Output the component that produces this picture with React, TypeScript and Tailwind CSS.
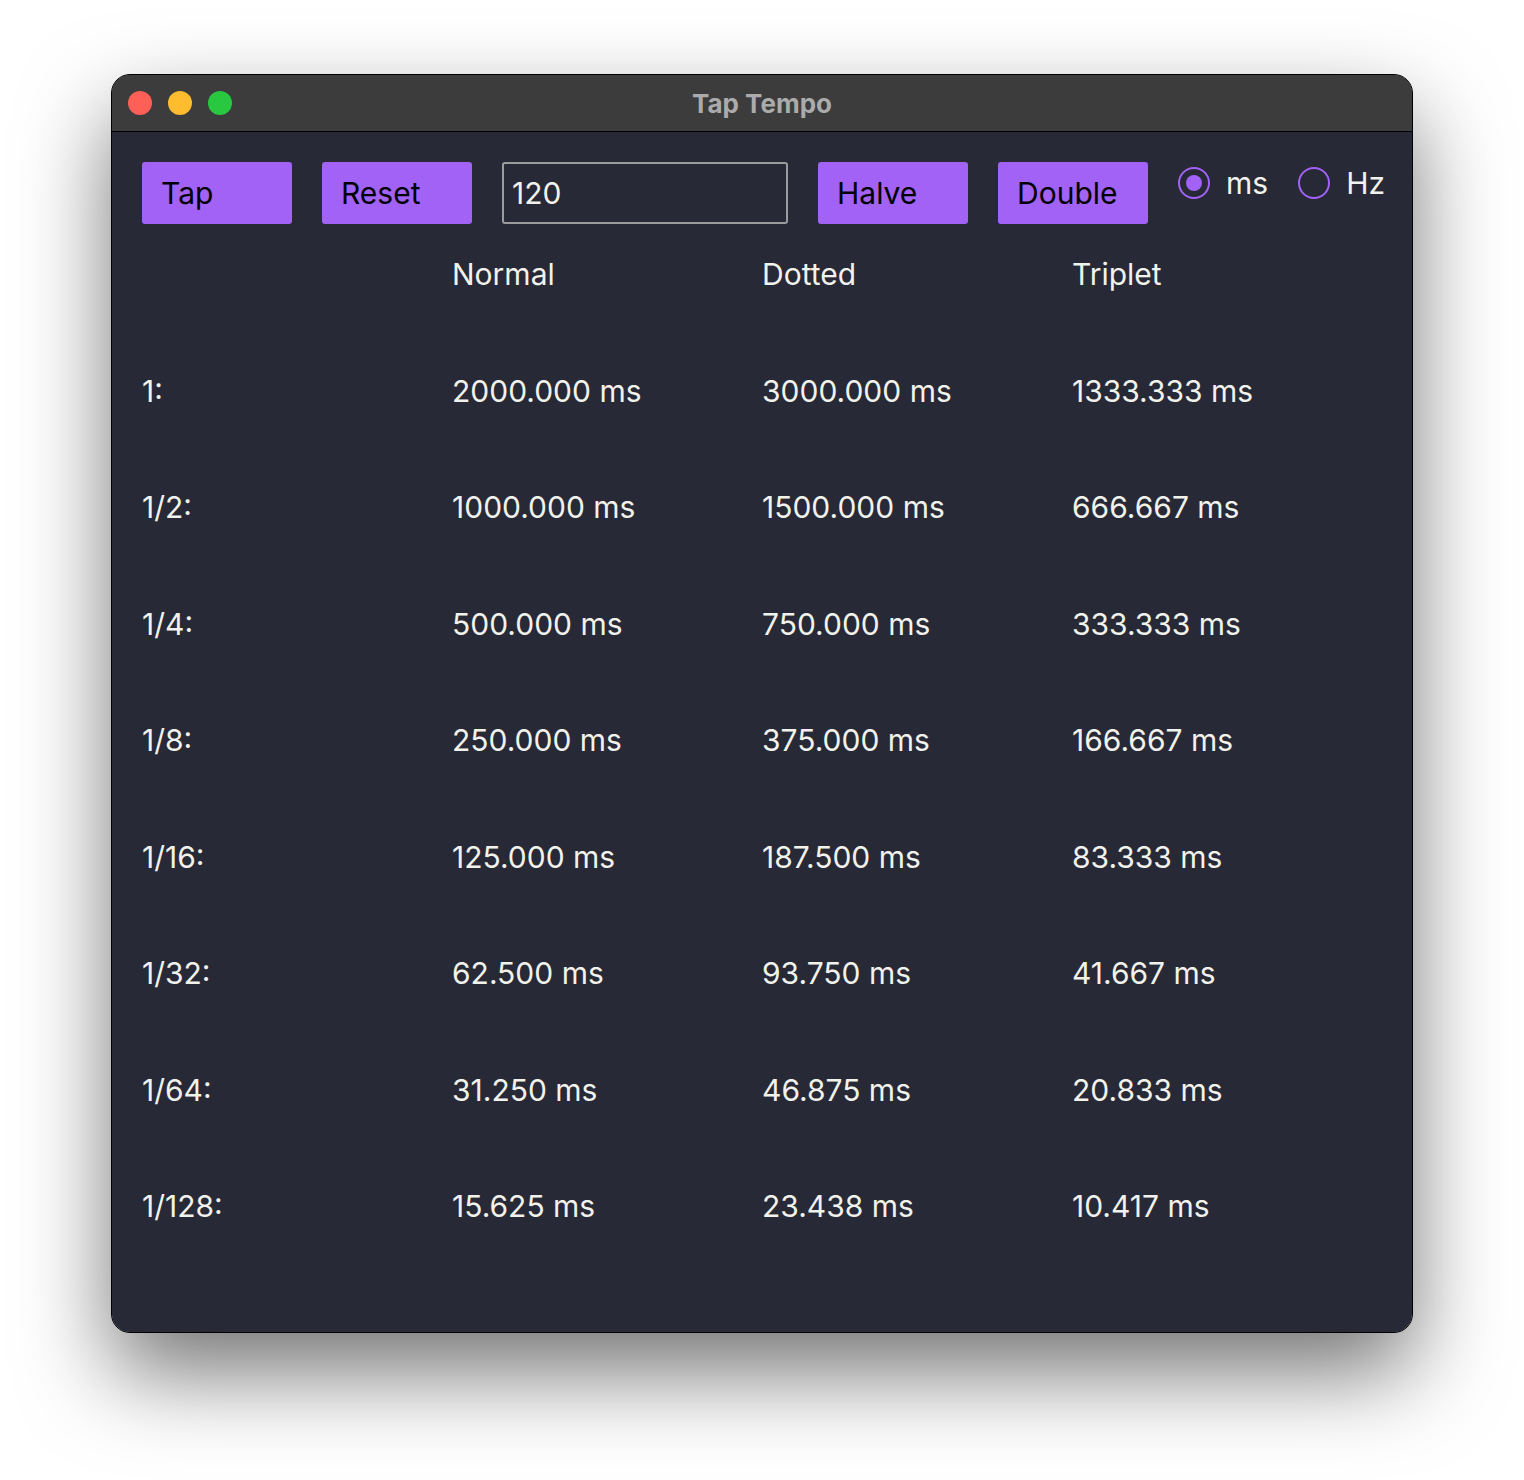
import React, { useState } from 'react';

const divisions = ['1', '1/2', '1/4', '1/8', '1/16', '1/32', '1/64', '1/128'];

const fmt = (v: number) => `${v.toFixed(3)} ms`;

const TrafficLights = () => (
  <div className="flex items-center gap-[16px]">
    <span className="w-[24px] h-[24px] rounded-full bg-[#fe5f57]" />
    <span className="w-[24px] h-[24px] rounded-full bg-[#febc2e]" />
    <span className="w-[24px] h-[24px] rounded-full bg-[#28c840]" />
  </div>
);

const PurpleButton = ({ label, onClick }: { label: string; onClick?: () => void }) => (
  <button
    onClick={onClick}
    className="w-[150px] h-[62px] shrink-0 rounded-[3px] bg-[#a162f5] text-black text-left pl-[19px] text-[30px] leading-none"
  >
    {label}
  </button>
);

const Radio = ({ label, checked, onClick }: { label: string; checked: boolean; onClick: () => void }) => (
  <button onClick={onClick} className="flex items-center gap-[16px] text-[30px] leading-[36px] text-[#f2f2ec]">
    <span className="w-[32px] h-[32px] rounded-full border-[2px] border-[#a162f5] flex items-center justify-center">
      {checked && <span className="w-[16px] h-[16px] rounded-full bg-[#a162f5]" />}
    </span>
    {label}
  </button>
);

export default function App() {
  const [bpm, setBpm] = useState('120');
  const [unit, setUnit] = useState<'ms' | 'Hz'>('ms');

  const beat = 60000 / (parseFloat(bpm) || 120);
  const whole = beat * 4;

  return (
    <div
      className="min-h-[1480px] bg-white pt-[75px] flex justify-center"
      style={{ fontFamily: 'Inter, "Noto Sans", sans-serif' }}
    >
      <div className="w-[1300px] h-[1257px] rounded-[18px] overflow-hidden outline outline-1 outline-black bg-[#272936] shadow-[0_40px_90px_rgba(0,0,0,0.55)] flex flex-col">
        {/* Title bar */}
        <div className="relative h-[57px] shrink-0 bg-[#3c3c3c] border-b border-black flex items-center px-[16px]">
          <TrafficLights />
          <div className="absolute inset-0 flex items-center justify-center text-[26px] font-bold text-[#ababab]">
            Tap Tempo
          </div>
        </div>

        <div className="p-[30px] flex flex-col">
          {/* Toolbar */}
          <div className="flex gap-[30px] items-start">
            <PurpleButton label="Tap" />
            <PurpleButton label="Reset" />
            <input
              value={bpm}
              onChange={(e) => setBpm(e.target.value)}
              className="w-[286px] h-[62px] shrink-0 rounded-[3px] border-[2px] border-[#9b9b9b] bg-transparent px-[8px] text-[30px] text-[#f2f2ec] outline-none"
            />
            <PurpleButton label="Halve" onClick={() => setBpm(String((parseFloat(bpm) || 120) / 2))} />
            <PurpleButton label="Double" onClick={() => setBpm(String((parseFloat(bpm) || 120) * 2))} />
            <div className="flex gap-[30px] ml-auto pt-[3px]">
              <Radio label="ms" checked={unit === 'ms'} onClick={() => setUnit('ms')} />
              <Radio label="Hz" checked={unit === 'Hz'} onClick={() => setUnit('Hz')} />
            </div>
          </div>

          {/* Table */}
          <div className="grid grid-cols-4 gap-y-[80.5px] mt-[32px] text-[30px] leading-[36px] text-[#f2f2ec]">
            <div />
            <div>Normal</div>
            <div>Dotted</div>
            <div>Triplet</div>
            {divisions.map((d, i) => {
              const n = whole / Math.pow(2, i);
              return (
                <React.Fragment key={d}>
                  <div>{d}:</div>
                  <div>{fmt(n)}</div>
                  <div>{fmt(n * 1.5)}</div>
                  <div>{fmt((n * 2) / 3)}</div>
                </React.Fragment>
              );
            })}
          </div>
        </div>
      </div>
    </div>
  );
}
